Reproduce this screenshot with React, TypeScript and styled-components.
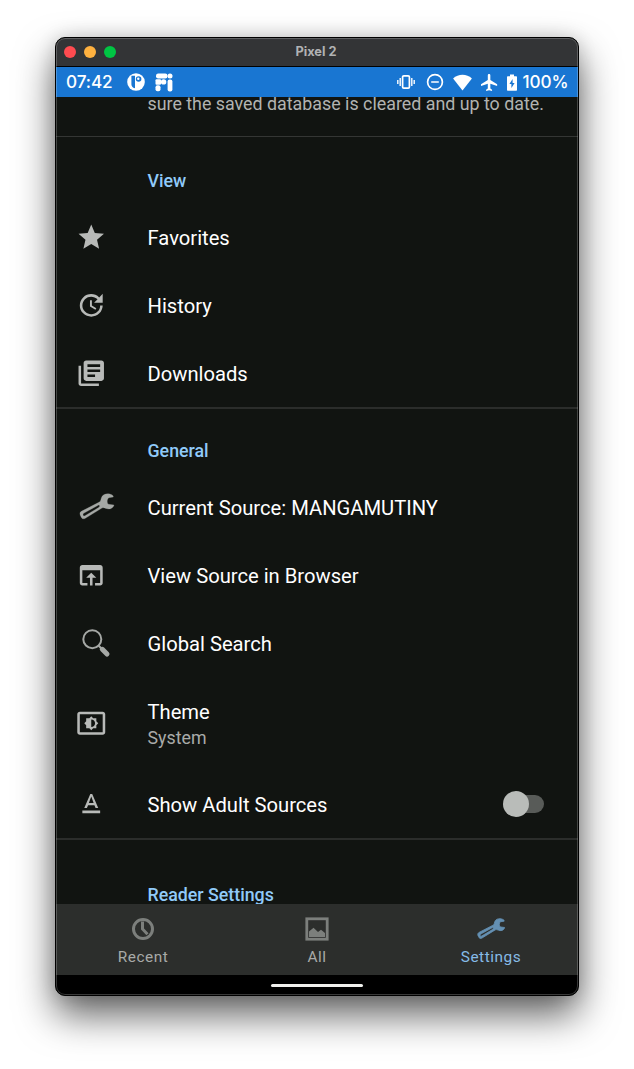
import React from "react";
import styled, { createGlobalStyle } from "styled-components";

const GlobalStyle = createGlobalStyle`
  * { box-sizing: border-box; }
  html, body { margin: 0; background: #fff; }
  body { overflow: hidden; }
  svg { display: block; flex: none; }
`;

const Stage = styled.main`
  width: 634px;
  height: 1069px;
  padding: 37px 55px;
  overflow: hidden;
  background: #fff;
  font-family: Roboto, sans-serif;
`;

const Window = styled.div`
  position: relative;
  display: flex;
  flex-direction: column;
  width: 524px;
  height: 959px;
  border: 1px solid #000;
  border-radius: 10px;
  overflow: hidden;
  background: #111411;
  box-shadow: 0 19px 38px rgba(0, 0, 0, 0.62), 0 0 18px rgba(0, 0, 0, 0.14);

  &::after {
    content: "";
    position: absolute;
    inset: 0;
    border: 1px solid rgba(255, 255, 255, 0.22);
    border-radius: 9px;
    pointer-events: none;
  }
`;

const TitleBar = styled.header`
  position: relative;
  flex: none;
  display: flex;
  align-items: center;
  gap: 8px;
  height: 29px;
  padding-left: 8px;
  background: #333436;
  border-bottom: 1px solid #000;
`;

const Light = styled.i<{ $color: string }>`
  width: 12px;
  height: 12px;
  border-radius: 50%;
  background: ${(p) => p.$color};
`;

const Title = styled.span`
  flex: 1;
  padding-right: 69px;
  margin-left: -1px;
  text-align: center;
  font: 700 12.8px/28px Inter, sans-serif;
  color: #b1b2b3;
`;

const StatusBar = styled.div`
  flex: none;
  display: flex;
  align-items: center;
  height: 30px;
  padding: 0 10px;
  background: #1976d2;
  color: #fff;
`;

const StatusText = styled.span<{ $width: number }>`
  width: ${(p) => p.$width}px;
  font: 500 17.2px/30px Inter, sans-serif;
  letter-spacing: -0.1px;
  white-space: nowrap;
`;

const StatusIcons = styled.div<{ $gap: number; $push?: boolean }>`
  display: flex;
  align-items: center;
  gap: ${(p) => p.$gap}px;
  margin-left: ${(p) => (p.$push ? "auto" : "14px")};
  margin-right: ${(p) => (p.$push ? "5.5px" : "0")};
`;

const Content = styled.section`
  flex: none;
  height: 807px;
  overflow: hidden;
  background: #111411;
`;

const Group = styled.div`
  border-bottom: 2px solid #2b2d2b;
`;

const Summary = styled.p`
  margin: -6px 0 0;
  height: 46px;
  padding-left: 91.5px;
  font-size: 17.83px;
  line-height: 26px;
  color: #b1b3b1;
  white-space: nowrap;
  border-bottom: 1px solid #343634;
`;

const Heading = styled.h2<{ $top: number }>`
  margin: 0;
  padding: ${(p) => p.$top}px 0 10px 91.5px;
  font-size: 17.8px;
  line-height: 24px;
  font-weight: 500;
  color: #90caf9;
`;

const Row = styled.div<{ $tall?: boolean }>`
  display: flex;
  align-items: center;
  height: ${(p) => (p.$tall ? 93 : 68)}px;
  padding-right: 34.5px;
`;

const IconSlot = styled.div`
  flex: none;
  width: 91.5px;
  padding-left: 20.4px;
  color: #b8bab8;
`;

const Labels = styled.div`
  flex: 1;
  white-space: nowrap;
`;

const Label = styled.div<{ $stacked?: boolean }>`
  padding-top: ${(p) => (p.$stacked ? 1 : 3)}px;
  font-size: 20.2px;
  line-height: 27px;
  color: #fff;
`;

const Value = styled.div`
  font-size: 17.8px;
  line-height: 24px;
  color: #a9aba9;
`;

const Track = styled.div`
  display: flex;
  align-items: center;
  width: 36px;
  height: 18px;
  border-radius: 9px;
  background: #585b58;
`;

const Thumb = styled.i`
  flex: none;
  width: 26px;
  height: 26px;
  margin-left: -5px;
  border-radius: 50%;
  background: #b9bcb9;
`;

const NavBar = styled.nav`
  flex: none;
  display: grid;
  grid-template-columns: repeat(3, 1fr);
  height: 71px;
  background: #2c2e2c;
`;

const NavItem = styled.div<{ $active?: boolean }>`
  display: flex;
  flex-direction: column;
  align-items: center;
  padding-top: 11px;
  color: ${(p) => (p.$active ? "#6490b3" : "#7c7f7c")};
`;

const NavIcon = styled.div`
  display: flex;
  align-items: center;
  height: 28px;
`;

const NavLabel = styled.span<{ $active?: boolean }>`
  font-size: 15.4px;
  line-height: 28px;
  letter-spacing: 0.55px;
  color: ${(p) => (p.$active ? "#86bbe7" : "#a8aaa8")};
`;

const HomeBar = styled.footer`
  flex: none;
  display: flex;
  align-items: center;
  justify-content: center;
  height: 20px;
  background: #000;
`;

const HomePill = styled.i`
  width: 92px;
  height: 3px;
  border-radius: 1.5px;
  background: #f0f1ee;
`;

const Glyph = ({ d, size = 30.5 }: { d: string; size?: number }) => (
  <svg width={size} height={size} viewBox="0 0 24 24" fill="currentColor">
    <path d={d} />
  </svg>
);

const STAR = "M12 17.27L18.18 21l-1.64-7.03L22 9.24l-7.19-.61L12 2 9.19 8.63 2 9.24l5.46 4.73L5.82 21z";
const HISTORY =
  "M21 10.12h-6.78l2.74-2.82c-2.73-2.7-7.15-2.8-9.88-.1-2.73 2.71-2.73 7.08 0 9.79s7.15 2.71 9.88 0C18.32 15.65 19 14.08 19 12.1h2c0 1.98-.88 4.55-2.64 6.29-3.51 3.48-9.21 3.48-12.72 0-3.5-3.47-3.53-9.11-.02-12.58s9.14-3.47 12.65 0L21 3v7.12zM12.5 8v4.25l3.5 2.08-.72 1.21L11 13V8h1.5z";
const BOOKS =
  "M4 6H2v14c0 1.1.9 2 2 2h14v-2H4V6zm16-4H8c-1.1 0-2 .9-2 2v12c0 1.1.9 2 2 2h12c1.1 0 2-.9 2-2V4c0-1.1-.9-2-2-2zm-1 9H9V9h10v2zm-4 4H9v-2h6v2zm4-8H9V5h10v2z";
const BROWSER =
  "M19 4H5c-1.11 0-2 .9-2 2v12c0 1.1.89 2 2 2h4v-2H5V8h14v10h-4v2h4c1.1 0 2-.9 2-2V6c0-1.1-.89-2-2-2zm-7 6l-4 4h3v6h2v-6h3l-4-4z";
const BRIGHTNESS =
  "M21 3H3c-1.1 0-2 .9-2 2v14c0 1.1.9 2 2 2h18c1.1 0 2-.9 2-2V5c0-1.1-.9-2-2-2zm0 16.01H3V4.99h18v14.02zM8 16h2.5l1.5 1.5 1.5-1.5H16v-2.5l1.5-1.5-1.5-1.5V8h-2.5L12 6.5 10.5 8H8v2.5L6.5 12 8 13.5V16zm4-7c1.66 0 3 1.34 3 3s-1.34 3-3 3V9z";
const TEXT_FORMAT =
  "M5 17v2h14v-2H5zm4.5-4.2h5l.9 2.2h2.1L12.75 4h-1.5L6.5 15h2.1l.9-2.2zM12 5.98L13.87 11h-3.74L12 5.98z";
const AIRPLANE =
  "M21 16v-2l-8-5V3.5c0-.83-.67-1.5-1.5-1.5S10 2.67 10 3.5V9l-8 5v2l8-2.5V19l-2 1.5V22l3.5-1 3.5 1v-1.5L13 19v-5.5l8 2.5z";

const WrenchSvg = ({ width, bold }: { width: number; bold?: boolean }) => (
  <svg width={width} height={width * 0.75} viewBox="57 39 108 81" fill="currentColor">
    <path
      fillRule="evenodd"
      stroke="currentColor"
      strokeWidth={bold ? 3 : 0.8}
      strokeLinejoin="round"
      d="M159 47C148 38 128 40 124 54C122 61 122 64 118 66L64 94C58 98 59 104 63 110C66 117 70 118 76 115L126 84C134 80 140 90 152 86C157 84 161 80 162 75L146 73C140 70 140 56 147 53L160 51ZM71 100L116 75Q121 76 117 82L75 107C69 110 67 103 71 100Z"
    />
  </svg>
);

const SourceWrench = styled.div`
  padding-left: 2.5px;
  padding-bottom: 2px;
  color: #a5a8a5;
`;

const Magnifier = styled.div`
  padding-left: 5px;
  padding-bottom: 1px;
  color: #a5a8a5;
`;

function App() {
  return (
    <>
      <GlobalStyle />
      <Stage>
        <Window>
          <TitleBar>
            <Light $color="#ff4b50" />
            <Light $color="#ffb13f" />
            <Light $color="#00c543" />
            <Title>Pixel 2</Title>
          </TitleBar>

          <StatusBar>
            <StatusText $width={47}>07:42</StatusText>
            <StatusIcons $gap={10}>
              <svg width="18" height="18" viewBox="0 0 18 18">
                <circle cx="9" cy="9" r="8.8" fill="#fff" />
                <path d="M4.4 2.8H8V15.3C5.4 15 4.4 13 4.4 11z" fill="#1976d2" />
                <circle cx="11.6" cy="6" r="2.8" fill="#1976d2" />
                <circle cx="11.3" cy="5.8" r="1.2" fill="#fff" />
              </svg>
              <svg width="18" height="19" viewBox="0 0 18 19" fill="#fff">
                <rect x="1" y="0.5" width="11.5" height="5" rx="2.2" />
                <circle cx="15" cy="3" r="2.5" />
                <rect x="0.5" y="6.3" width="5.5" height="5.5" rx="1" />
                <circle cx="8.6" cy="8.9" r="2.7" />
                <rect x="0.5" y="12.3" width="5" height="6" rx="2" />
                <rect x="12.6" y="6.5" width="4.8" height="12" rx="2" />
              </svg>
            </StatusIcons>
            <StatusIcons $gap={9} $push>
              <svg width="18" height="16" viewBox="0 0 18 16" fill="none" stroke="#fff">
                <rect x="5.6" y="1.8" width="6.8" height="12.4" rx="1.2" strokeWidth="1.7" />
                <path d="M3.2 4v8M14.8 4v8M.8 6v4M17.2 6v4" strokeWidth="1.4" />
              </svg>
              <svg width="20" height="18" viewBox="0 0 20 18" fill="none" stroke="#fff" strokeWidth="1.7">
                <circle cx="11" cy="9" r="7.4" />
                <path d="M7.2 9h7.6" />
              </svg>
              <svg width="19" height="17" viewBox="0 0 19 17" fill="#fff">
                <path d="M9.5 16.5L.1 4.4C5.300-.4 13.700-.4 18.900 4.400z" />
              </svg>
              <svg width="17" height="17" viewBox="2 2 19 20" fill="#fff" preserveAspectRatio="xMinYMid meet">
                <path d={AIRPLANE} />
              </svg>
              <svg width="10" height="17" viewBox="0 0 10 17" fill="#fff" fillRule="evenodd">
                <path d="M3 .5h4v1.7h2c.6 0 1 .4 1 1v12.5c0 .6-.4 1-1 1H1c-.6 0-1-.4-1-1V3.200c0-.6.4-1 1-1h2zM5.600 5L2.400 10h2v4L7.600 9h-2z" />
              </svg>
            </StatusIcons>
            <StatusText $width={45.5}>100%</StatusText>
          </StatusBar>

          <Content>
            <Summary>sure the saved database is cleared and up to date.</Summary>
            <Group>
              <Heading $top={32}>View</Heading>
              <Row>
                <IconSlot><Glyph d={STAR} /></IconSlot>
                <Label>Favorites</Label>
              </Row>
              <Row>
                <IconSlot><Glyph d={HISTORY} /></IconSlot>
                <Label>History</Label>
              </Row>
              <Row>
                <IconSlot><Glyph d={BOOKS} /></IconSlot>
                <Label>Downloads</Label>
              </Row>
            </Group>
            <Group>
              <Heading $top={30}>General</Heading>
              <Row>
                <IconSlot>
                  <SourceWrench><WrenchSvg width={36} /></SourceWrench>
                </IconSlot>
                <Label>Current Source: MANGAMUTINY</Label>
              </Row>
              <Row>
                <IconSlot><Glyph d={BROWSER} /></IconSlot>
                <Label>View Source in Browser</Label>
              </Row>
              <Row>
                <IconSlot>
                  <Magnifier>
                    <svg width="30" height="30" viewBox="0 0 30 30" fill="none" stroke="currentColor">
                      <circle cx="11.3" cy="11.2" r="9" strokeWidth="2" />
                      <path d="M17.7 17.7L21 21" strokeWidth="2" />
                      <path d="M21.3 21.3L26 26" strokeWidth="5" strokeLinecap="round" />
                    </svg>
                  </Magnifier>
                </IconSlot>
                <Label>Global Search</Label>
              </Row>
              <Row $tall>
                <IconSlot><Glyph d={BRIGHTNESS} /></IconSlot>
                <Labels>
                  <Label $stacked>Theme</Label>
                  <Value>System</Value>
                </Labels>
              </Row>
              <Row>
                <IconSlot><Glyph d={TEXT_FORMAT} /></IconSlot>
                <Labels>
                  <Label>Show Adult Sources</Label>
                </Labels>
                <Track><Thumb /></Track>
              </Row>
            </Group>
            <Heading $top={43}>Reader Settings</Heading>
          </Content>

          <NavBar>
            <NavItem>
              <NavIcon>
                <svg width="24" height="24" viewBox="0 0 24 24" fill="none" stroke="currentColor" strokeWidth="3">
                  <circle cx="12" cy="12" r="9.5" />
                  <path d="M11.5 4.5V12L16.5 17.2" />
                </svg>
              </NavIcon>
              <NavLabel>Recent</NavLabel>
            </NavItem>
            <NavItem>
              <NavIcon>
                <svg width="24" height="24" viewBox="0 0 24 24">
                  <rect x="1.8" y="1.8" width="20.4" height="20.4" fill="none" stroke="currentColor" strokeWidth="2.8" />
                  <path d="M4 20v-5.5l4.5-3.8 4.5 4.3 3-2.3 4 3.3v4z" fill="currentColor" />
                </svg>
              </NavIcon>
              <NavLabel>All</NavLabel>
            </NavItem>
            <NavItem $active>
              <NavIcon><WrenchSvg width={28.5} bold /></NavIcon>
              <NavLabel $active>Settings</NavLabel>
            </NavItem>
          </NavBar>
          <HomeBar><HomePill /></HomeBar>
        </Window>
      </Stage>
    </>
  );
}

export default App;
